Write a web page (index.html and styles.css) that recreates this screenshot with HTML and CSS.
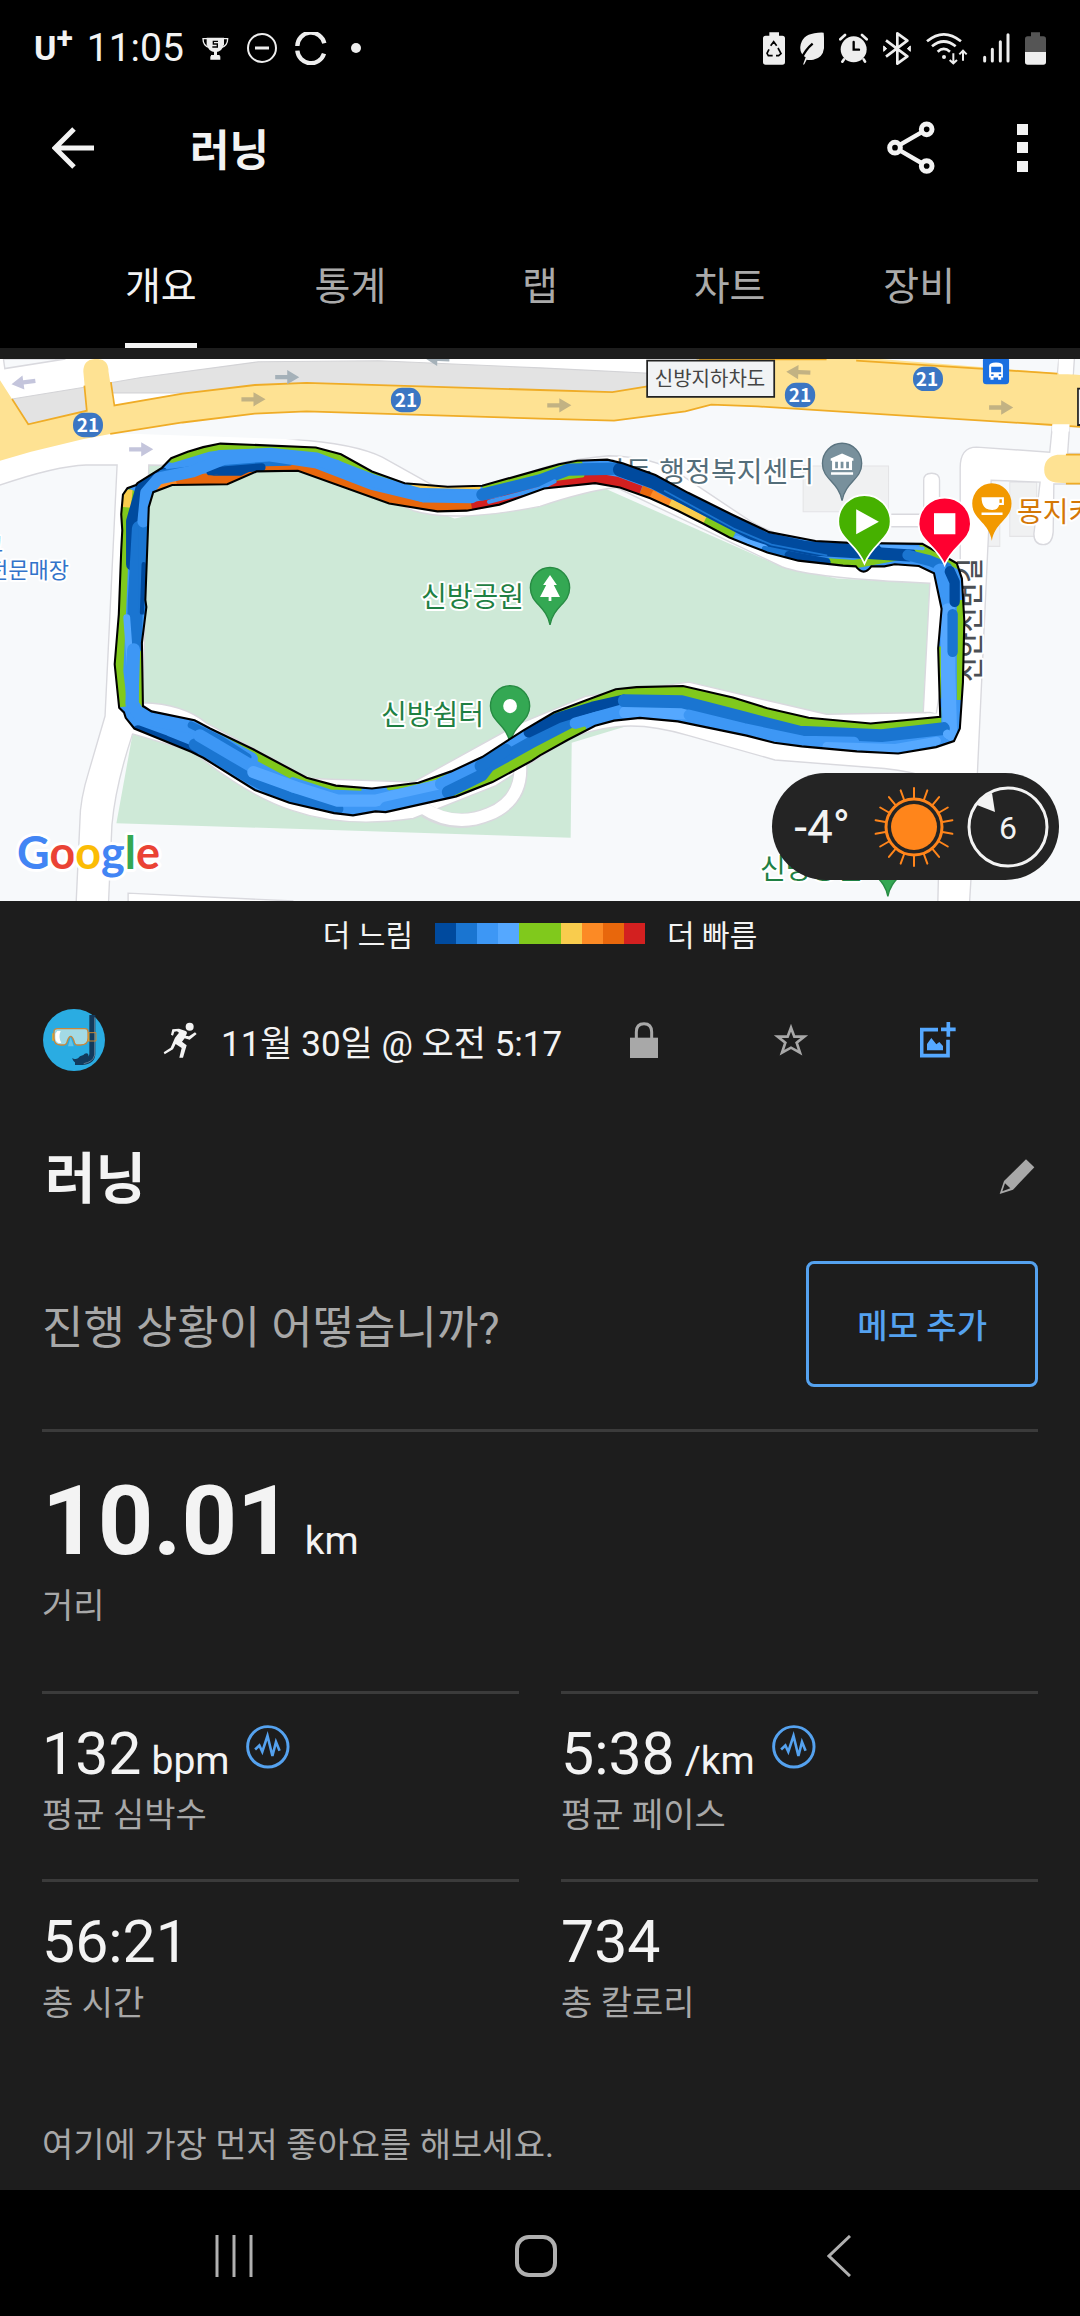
FILE: index.html
```html
<!DOCTYPE html>
<html lang="ko">
<head>
    <meta charset="UTF-8">
    <meta name="viewport" content="width=device-width, initial-scale=1.0">
    <title>러닝</title>
    <link rel="stylesheet" href="styles.css">
</head>
<body>

    <header class="top">
        <!-- Status bar -->
        <div class="status-bar">
            <div class="status-left">
                <span class="carrier">U<sup>+</sup></span>
                <span class="clock">11:05</span>
                <svg width="27" height="23" viewBox="546 112 81 69" fill="none" stroke="#eee" stroke-width="4">
                    <path d="M560 114h52v20q-4 22-26 24q-22-2-26-24z" fill="#eee" stroke="none"/>
                    <path d="M562 117h-13q0 22 20 27M610 117h13q0 22-20 27"/>
                    <path d="M582 154h9v12h8v4h2v10h-30v-10h2v-4h9z" fill="#eee" stroke="none"/>
                    <path d="M594 125h-14v8h12v9h-15" stroke="#000"/>
                </svg>
                <svg width="30" height="30" viewBox="0 0 30 30" fill="none" stroke="#eee">
                    <circle cx="15" cy="15" r="14" stroke-width="2"/>
                    <path d="M8 15h14" stroke-width="3"/>
                </svg>
                <svg width="32" height="33" viewBox="821 95 96 99" fill="none" stroke="#eee" stroke-width="13">
                    <path d="M828 137A41 41 0 0 1 909 129M828 151A41 41 0 0 0 908 160"/>
                </svg>
                <span class="more-dot"></span>
            </div>
            <div class="status-right">
                <svg width="22" height="33" viewBox="78 96 66 99">
                    <path d="M97 97h29v10h10q8 0 8 8v71q0 8-8 8H86q-8 0-8-8v-71q0-8 8-8h11z" fill="#eee"/>
                    <path d="M101 137l9-12 9 12M123 144l9 17-7 6h-8M107 167h-13l-4-7 6-12" fill="none" stroke="#000" stroke-width="5"/>
                </svg>
                <svg width="24" height="33" viewBox="195 96 72 99">
                    <path d="M204 194l8-22q-18-10-16-32q4-34 42-40q15-3 28-2q2 22 1 47q-4 30-32 34q-12 2-20 0l-7 14z" fill="#eee"/>
                    <path d="M198 178q14-30 35-47" fill="none" stroke="#000" stroke-width="7"/>
                </svg>
                <svg width="29" height="31" viewBox="315 100 87 93" stroke="#eee" stroke-width="8" fill="none" stroke-linecap="round">
                    <circle cx="359" cy="149" r="39" fill="#eee" stroke="none"/>
                    <path d="M319 119l14-13M398 119l-14-13M330 179l-5 7M389 179l4 7"/>
                    <path d="M359 127v23h16" stroke="#000" stroke-width="7"/>
                </svg>
                <svg width="28" height="33" viewBox="449 96 84 99" fill="none" stroke="#eee" stroke-width="8">
                    <path d="M458 121l64 48-30 22V100l30 22-64 48" stroke-linejoin="round"/>
                    <path d="M451 138l9 8-9 8zM531 138l-9 8 9 8z" fill="#eee" stroke-width="3"/>
                </svg>
                <svg width="42" height="33" viewBox="573 96 126 99" fill="none" stroke="#eee" stroke-width="8">
                    <path d="M576 124q50-42 102 0M591 139q35-29 71 0M608 155q18-17 37 0"/>
                    <circle cx="627" cy="171" r="6" fill="#eee" stroke="none"/>
                    <path d="M655 160v30M644 180l11 10 11-10M684 182v-30M673 163l11-11 11 11" stroke-width="6"/>
                </svg>
                <svg width="27" height="30" viewBox="728 101 81 90" stroke="#eee" stroke-width="9" stroke-linecap="round">
                    <path d="M733 174v11M756 150v35M780 127v58M803 106v79"/>
                </svg>
                <svg width="21" height="33" viewBox="855 96 63 99">
                    <path d="M873 97h27v12h10q8 0 8 8v39h-63v-39q0-8 8-8h10z" fill="#555"/>
                    <path d="M855 156h63v30q0 8-8 8h-47q-8 0-8-8z" fill="#eee"/>
                </svg>
            </div>
        </div>

        <!-- App bar -->
        <div class="app-bar">
            <button class="icon-button" aria-label="뒤로">
                <svg width="42" height="42" viewBox="0 0 42 42" fill="none" stroke="#f3f3f3" stroke-width="5">
                    <path d="M42 21H4M22 2L3 21l19 19"/>
                </svg>
            </button>
            <h1>러닝</h1>
            <button class="icon-button share" aria-label="공유">
                <svg width="48" height="54" viewBox="443 362 144 162" fill="none" stroke="#f3f3f3" stroke-width="15">
                    <path d="M467 442l95-55M467 442l95 55" stroke-width="13"/>
                    <circle cx="467" cy="442" r="16" fill="#000"/>
                    <circle cx="562" cy="387" r="16" fill="#000"/>
                    <circle cx="562" cy="497" r="16" fill="#000"/>
                </svg>
            </button>
            <button class="icon-button" aria-label="더보기">
                <svg width="11" height="48" viewBox="0 0 11 48" fill="#f3f3f3">
                    <path d="M0 0h11v11H0zM0 18h11v11H0zM0 37h11v11H0z"/>
                </svg>
            </button>
        </div>

        <nav class="tabs" role="tablist">
            <button role="tab" aria-selected="true" class="active"><span>개요</span></button>
            <button role="tab" aria-selected="false"><span>통계</span></button>
            <button role="tab" aria-selected="false"><span>랩</span></button>
            <button role="tab" aria-selected="false"><span>차트</span></button>
            <button role="tab" aria-selected="false"><span>장비</span></button>
        </nav>
    </header>

    <main>
        <!-- Map -->
        <section class="map">
            <svg class="map-canvas" viewBox="0 0 1080 542" preserveAspectRatio="xMidYMid slice">
                <defs>
                    <path id="ring" clip-rule="evenodd" fill-rule="evenodd" d="M400 372L470 330L497 303L545 285L590 272L640 262L917 273L990 292L1080 340L1175 373L1300 383L1400 380L1568 335L1623 320L1676 310L1763 307L1808 317L1903 350L1998 400L2128 462L2233 510L2368 535L2468 540L2678 543L2778 597L2793 640L2800 760L2796 930L2787 1060L2770 1095L2718 1112L2608 1130L2488 1124L2328 1110L2248 1100L2168 1080L1968 1040L1858 1030L1783 1038L1728 1052L1648 1092L1568 1135L1545 1150L1430 1210L1325 1250L1120 1294L1090 1292L1025 1303L970 1297L840 1268L740 1232L590 1142L555 1125L390 1060L365 1030L360 1015L346 1002L333 880L345 740L352 560L355 505L352 460L357 405L370 387L395 378Z
                    M500 378L660 376L745 340L865 338L1130 430L1270 452L1355 450L1450 433L1580 388L1728 373L1800 385L1888 415L1968 450L2040 485L2118 525L2168 545L2228 567L2318 590L2448 604L2485 606Q2508 635 2530 606L2568 606L2598 600L2668 605L2712 625L2734 725L2724 835L2730 1027L2528 1046L2348 1030L2228 1003L2128 973L1983 941L1848 944L1788 950L1698 982L1608 1015L1520 1065L1400 1140L1310 1180L1215 1212L1080 1228L975 1220L890 1198L735 1118L610 1060L565 1037L440 1012L415 997L412 820L425 720L422 700L432 440L445 398Z"/>
                    <clipPath id="ringClip"><use href="#ring"/></clipPath>
                    <path id="arrow" d="M-35-6H0V-20L35 0L0 20V6H-35Z"/>
                    <path id="pin" d="M0 104C-10 50-57 45-57 0A57 57 0 0 1 57 0C57 45 10 50 0 104Z"/>
                </defs>
                <rect width="1080" height="542" fill="#f7f9fb"/>

                <g transform="translate(0 -9) scale(.3444 .3571)">
                    <!-- Blocks and park -->
                    <g fill="#f0f1f2" stroke="#e4e4e6" stroke-width="3">
                        <path d="M2332 325h248v128h-248zM2932 370h78v152h-78zM2858 480h45v70h-45z"/>
                    </g>
                    <path fill="#cee9d7" d="M432 322H900L1320 472L1750 385L2270 607L2430 640L2700 653L2680 1030L2400 1090L1900 1030L1660 1100L1657 1366L338 1325L385 1075L415 990Z"/>

                    <!-- Side roads -->
                    <g fill="#fff" stroke="#d9d9de" stroke-width="4">
                        <path d="M10 20L14 52L200 20ZM-5 380Q160 325 250 322H340L305 1025L258 1180Q232 1260 232 1320L221 1550H315L325 1330Q335 1220 385 1075L415 988L432 322L900 330L1200 450Q1320 485 1568 438Q1700 395 1790 385L2270 607Q2360 640 2700 653L2680 1030H2760L2830 600L2368 545Q2250 520 2180 480L1970 345Q1900 300 1768 296Q1600 310 1500 360Q1300 410 1240 370L1110 300Q1030 262 850 250L400 235L-5 290Z"/>
                        <path d="M415 988Q530 990 600 1045L900 1200L1200 1210L1500 1050L1700 970L2000 930L2400 1020L2700 1015L2800 1040L2838 1200H2700Q2650 1180 2568 1172L2250 1148L2000 1080Q1880 1045 1790 1055Q1700 1065 1640 1095L1440 1220L1200 1312Q1000 1340 850 1290Q720 1250 560 1125L385 1075Z"/>
                        <path d="M372 1550V1521L850 1543V1550Z"/>
                        <path d="M2788 600V330Q2788 272 2836 272L3048 286L3075 20H3120L3100 290H3145V375H3060L3058 510Q3055 545 3030 545Q3002 545 3002 515L3020 370L2878 365L2868 560L2838 1185L2815 1550H2723L2732 1180L2700 1130Z"/>
                        <path d="M2682 500V365Q2682 345 2705 345Q2728 345 2728 365V500M2588 460H2680V495H2588"/>
                    </g>
                    <path d="M330 1067L400 985L430 1000L420 1070L382 1074Z" fill="#fff"/>
                    <path d="M2690 1018H2770V1190H2728Q2690 1120 2660 1100Z" fill="#fff"/>
                    <path d="M1235 1290Q1320 1340 1420 1300T1510 1160" fill="none" stroke="#d9d9de" stroke-width="42"/>
                    <path d="M1225 1280Q1320 1340 1420 1300T1510 1155" fill="none" stroke="#fff" stroke-width="34"/>

                    <!-- Main road -->
                    <path d="M0 20H2500V120L1000 240L0 310Z" fill="#fff"/>
                    <path d="M320 236L530 203L740 178L890 172L1568 192L1783 198L2065 153L3040 215V260H1400L850 250L400 235Z" fill="#f7f9fb"/>
                    <path d="M10 25L14 52L190 25Z" fill="#f7f9fb" stroke="#d9d9de" stroke-width="4"/>
                    <path d="M35 137L240 105L410 77L750 33L1100 30L1568 50L1900 66L1880 120H300L252 172L82 208Z" fill="#e3e3e3" stroke="#d3d3d6" stroke-width="3"/>
                    <path d="M0 85L82 208L252 170L242 60Q242 25 280 25Q315 25 315 60L330 155L530 122L740 98L890 92L1568 112L1778 118L1880 102L2035 20H2488L3136 70V215L2200 158L2065 153L1990 172L1783 198L1568 192L890 172L740 178L530 203L320 235L240 250L90 285L0 310Z" fill="#fee293"/>
                    <path d="M35 137L82 208L252 170L245 100M322 90L332 155L530 122L740 98L890 92L1568 112L1778 118L1880 102M2030 26H2400M2486 30L3070 66M320 235L530 203L740 178L890 172L1568 192L1783 198L1990 172L2065 153L2200 158L3058 210M3105 213L3136 215" fill="none" stroke="#efac27" stroke-width="5"/>
                    <path d="M3136 293H3070Q3032 300 3032 335T3075 372L3136 375Z" fill="#fee293"/>
                    <path d="M3095 293H3136M3095 374H3136" stroke="#efac27" stroke-width="5"/>
                    <path d="M3074 20h40v48h-40zM3055 208h50v20h-50z" fill="#fff"/>
                    <g fill="#c4c5dc">
                        <use href="#arrow" transform="translate(68 91) rotate(172)"/>
                        <use href="#arrow" transform="translate(410 278)"/>
                    </g>
                    <g fill="#a5b1b9">
                        <use href="#arrow" transform="translate(834 76)"/>
                        <use href="#arrow" transform="translate(1270 25) rotate(182)"/>
                    </g>
                    <g fill="#c2b283">
                        <use href="#arrow" transform="translate(736 138)"/>
                        <use href="#arrow" transform="translate(1624 155)"/>
                        <use href="#arrow" transform="translate(2318 62) rotate(182)"/>
                        <use href="#arrow" transform="translate(2907 161)"/>
                    </g>
                    <g fill="#3b76c3">
                        <rect x="212" y="176" width="87" height="68" rx="32"/>
                        <rect x="1135" y="106" width="87" height="68" rx="32"/>
                        <rect x="2279" y="92" width="88" height="68" rx="32"/>
                        <rect x="2651" y="47" width="87" height="68" rx="32"/>
                    </g>
                    <path d="M1879 30h369v101h-369z" fill="#f1f3f5" stroke="#222" stroke-width="5"/>
                    <path d="M3130 108h20v102h-20z" fill="#f1f3f5" stroke="#222" stroke-width="5"/>

                    <!-- Bus stop -->
                    <rect x="2854" y="20" width="76" height="76" rx="10" fill="#1a6fe0"/>
                    <path d="M2872 45q0-10 20-10t20 10v32h-5v6h-9v-6h-13v6h-9v-6h-4z" fill="#fff"/>
                    <path d="M2878 47h29v15h-29zM2878 68h7v5h-7zM2900 68h7v5h-7z" fill="#1a6fe0"/>

                    <!-- Place pins -->
                    <use href="#pin" transform="translate(1597 666)" fill="#34a853" stroke="#278b43" stroke-width="4"/>
                    <path d="M1597 630l20 28h-9l18 34h-25v11h-8v-11h-25l18-34h-9z" fill="#fff"/>
                    <use href="#pin" transform="translate(1481 997)" fill="#34a853" stroke="#278b43" stroke-width="4"/>
                    <circle cx="1481" cy="997" r="20" fill="#fff"/>
                    <use href="#pin" transform="translate(2445 318)" fill="#78909c" stroke="#5b7480" stroke-width="4"/>
                    <path d="M2412 310v-6l33-14 33 14v6h-4v26h-58v-26zM2413 342h64v7h-64z" fill="#fff"/>
                    <path d="M2425 313h8v18h-8zM2441 313h8v18h-8zM2457 313h8v18h-8z" fill="#78909c"/>
                    <use href="#pin" transform="translate(2880 430)" fill="#f29900"/>
                    <path d="M2850 412h65v22h-14q-3 14-20 14q-31-1-31-36zM2850 455h61v7h-61z" fill="#fff"/>
                    <path d="M2902 418h7v10h-7z" fill="#f29900"/>
                    <use href="#pin" transform="translate(2578 1426)" fill="#34a853" stroke="#278b43" stroke-width="4"/>
                </g>

                <!-- Map labels -->
                <g class="map-label">
                    <g class="shield">
                        <text x="88" y="73">21</text>
                        <text x="406" y="48">21</text>
                        <text x="800" y="43">21</text>
                        <text x="927" y="27">21</text>
                    </g>
                    <text class="road-name" x="710" y="27">신방지하차도</text>
                    <text class="shop" x="-17" y="193">코</text>
                    <text class="shop" x="-12" y="219">전문매장</text>
                    <text class="park" x="421" y="248">신방공원</text>
                    <text class="park" x="381" y="366">신방쉼터</text>
                    <text class="park" x="760" y="520">신방공원</text>
                    <text class="office" x="600" y="123">방동 행정복지센터</text>
                    <text class="cafe" x="1017" y="163">몽지카</text>
                    <text class="street" transform="translate(980 323) rotate(-90)">신안신번길</text>
                    <text class="google" x="17" y="510"><tspan fill="#4285f4">G</tspan><tspan fill="#ea4335">o</tspan><tspan fill="#fbbc05">o</tspan><tspan fill="#4285f4">g</tspan><tspan fill="#34a853">l</tspan><tspan fill="#ea4335">e</tspan></text>
                </g>

                <!-- Route -->
                <g transform="translate(0 -9) scale(.3444 .3571)">
                    <use href="#ring" fill="#3d97f5"/>
                    <g clip-path="url(#ringClip)" fill="none" stroke-linecap="round" stroke-linejoin="round">
                        <!-- fast sections -->
                        <path d="M500 300L600 270L640 264L917 275L990 294L1090 347L1180 375" stroke="#80c91c" stroke-width="32"/>
                        <path d="M1200 380L1390 384" stroke="#f9cc4d" stroke-width="12"/>
                        <path d="M1410 378L1568 335L1680 320" stroke="#80c91c" stroke-width="24"/>
                        <path d="M450 390L570 360" stroke="#fc8a25" stroke-width="26"/>
                        <path d="M530 365L670 365L760 330L870 332L1130 420L1270 440L1360 440" stroke="#e8670c" stroke-width="38"/>
                        <path d="M1370 442L1450 427L1580 382L1728 360L1790 370L1860 395" stroke="#d32020" stroke-width="30" stroke-linecap="butt"/>
                        <path d="M1860 395L1900 412" stroke="#e8670c" stroke-width="34" stroke-linecap="butt"/>
                        <path d="M1890 406L1950 436" stroke="#fc8a25" stroke-width="30" stroke-linecap="butt"/>
                        <path d="M1945 430L2050 482" stroke="#f9cc4d" stroke-width="28" stroke-linecap="butt"/>
                        <path d="M2045 480L2130 522" stroke="#80c91c" stroke-width="28" stroke-linecap="butt"/>
                        <path d="M1610 360L1690 350" stroke="#80c91c" stroke-width="14"/>
                        <path d="M392 395L362 470L354 600L345 800L340 900L352 1000" stroke="#80c91c" stroke-width="36" stroke-linecap="butt"/>
                        <path d="M365 390L360 440" stroke="#f9cc4d" stroke-width="40" stroke-linecap="butt"/>
                        <path d="M409 820V1000" stroke="#80c91c" stroke-width="12"/>
                        <path d="M600 1060L735 1120L890 1200L1050 1230" stroke="#80c91c" stroke-width="44" stroke-linecap="butt"/>
                        <path d="M1130 1226L1220 1212L1300 1185" stroke="#80c91c" stroke-width="14"/>
                        <path d="M1330 1245L1430 1200L1580 1120L1680 1068" stroke="#80c91c" stroke-width="48"/>
                        <path d="M1600 1015L1790 952L1983 944L2128 975L2348 1035L2528 1050L2730 1032" stroke="#80c91c" stroke-width="64"/>
                        <path d="M2360 592L2480 600L2700 560L2750 590" stroke="#80c91c" stroke-width="24"/>
                        <path d="M2680 548L2785 605" stroke="#80c91c" stroke-width="20"/>
                        <path d="M2730 830V975M2790 700V980" stroke="#80c91c" stroke-width="24" stroke-linecap="butt"/>

                        <!-- slow sections -->
                        <path d="M610 352L765 322L700 352Z" fill="#004a9e" stroke="none"/>
                        <path d="M384 600L384 480L412 385L470 345" stroke="#004a9e" stroke-width="36"/>
                        <path d="M405 500L393 700L390 830" stroke="#1a75d1" stroke-width="44"/>
                        <path d="M414 460V730" stroke="#1a75d1" stroke-width="24"/>
                        <path d="M417 600L412 735" stroke="#004a9e" stroke-width="12"/>
                        <path d="M368 750L378 880" stroke="#55a8ff" stroke-width="20"/>
                        <path d="M470 345L560 335L640 318L840 314" stroke="#1a75d1" stroke-width="20"/>
                        <path d="M610 340L760 328" stroke="#004a9e" stroke-width="22"/>
                        <path d="M416 480L424 400L460 360L560 340L650 305L780 295L920 315L1080 375L1230 410L1370 412" stroke="#3d97f5" stroke-width="34"/>
                        <path d="M640 298L790 292L920 305L1080 365L1230 408" stroke="#3d97f5" stroke-width="36"/>
                        <path d="M1400 405L1568 365L1650 335L1800 332" stroke="#1a75d1" stroke-width="34"/>
                        <path d="M1420 425L1568 388L1610 368" stroke="#3d97f5" stroke-width="12"/>
                        <path d="M1800 335L1900 370L2080 460L2220 530L2340 555L2640 572" stroke="#004a9e" stroke-width="40"/>
                        <path d="M1930 395L2130 500L2240 545L2400 575" stroke="#1a75d1" stroke-width="5"/>
                        <path d="M2140 530L2220 555" stroke="#55a8ff" stroke-width="20"/>
                        <path d="M2220 558L2360 585L2400 590" stroke="#1a75d1" stroke-width="18"/>
                        <path d="M2290 575L2400 595" stroke="#004a9e" stroke-width="24"/>
                        <path d="M2560 548L2680 556" stroke="#55a8ff" stroke-width="10"/>
                        <path d="M2635 574L2700 590L2750 610" stroke="#1a75d1" stroke-width="30"/>
                        <path d="M2730 620L2755 740V1040" stroke="#3d97f5" stroke-width="44"/>
                        <path d="M2753 730V900L2758 1070" stroke="#55a8ff" stroke-width="42"/>
                        <path d="M2766 740V845" stroke="#1a75d1" stroke-width="30"/>
                        <path d="M2758 620L2772 650V705" stroke="#004a9e" stroke-width="30"/>
                        <path d="M388 840L383 990L410 1030L560 1055L730 1145" stroke="#3d97f5" stroke-width="38"/>
                        <path d="M400 1066L480 1094L560 1125" stroke="#004a9e" stroke-width="30"/>
                        <path d="M565 1105L720 1195L840 1255L980 1285" stroke="#1a75d1" stroke-width="34"/>
                        <path d="M555 1050L640 1090L720 1140" stroke="#1a75d1" stroke-width="20"/>
                        <path d="M580 1080L730 1165" stroke="#3d97f5" stroke-width="36"/>
                        <path d="M850 1205L960 1240L1100 1245" stroke="#3d97f5" stroke-width="18"/>
                        <path d="M735 1182L860 1225L980 1262L1090 1262L1270 1220" stroke="#55a8ff" stroke-width="34"/>
                        <path d="M1120 1282L1290 1245M1280 1215L1420 1150" stroke="#3d97f5" stroke-width="34"/>
                        <path d="M1300 1238L1400 1190L1420 1165L1540 1100L1660 1040" stroke="#1a75d1" stroke-width="34"/>
                        <path d="M1395 1165L1470 1120" stroke="#1a75d1" stroke-width="34"/>
                        <path d="M1535 1070L1620 1030L1720 1000L1810 980" stroke="#004a9e" stroke-width="30"/>
                        <path d="M1670 1045L1800 1010L1990 1015" stroke="#3d97f5" stroke-width="32"/>
                        <path d="M1815 1015L1990 1018" stroke="#55a8ff" stroke-width="34"/>
                        <path d="M1812 982L1980 985L2160 1030L2320 1070L2560 1080L2740 1060" stroke="#1a75d1" stroke-width="36"/>
                        <path d="M2000 1022L2160 1060L2330 1095L2480 1098" stroke="#3d97f5" stroke-width="30"/>
                        <path d="M2400 1110L2600 1115L2720 1095" stroke="#55a8ff" stroke-width="24"/>
                        <path d="M2750 1075L2765 1085" stroke="#55a8ff" stroke-width="24"/>
                    </g>
                    <use href="#ring" fill="none" stroke="#000" stroke-width="6"/>

                    <!-- Start and finish -->
                    <path d="M2510 598C2485 540 2434 530 2434 480A76 74 0 0 1 2586 480C2586 530 2535 540 2510 598Z" fill="#46b100" stroke="#fff" stroke-width="5"/>
                    <path d="M2486 446L2552 481L2486 516Z" fill="#fff"/>
                    <path d="M2743 602C2718 545 2667 535 2667 487A76 74 0 0 1 2819 487C2819 535 2768 545 2743 602Z" fill="#ff0030" stroke="#fff" stroke-width="5"/>
                    <path d="M2712 457h62v59h-62z" fill="#fff"/>
                </g>
            </svg>

            <div class="weather">
                <span class="temperature">-4°</span>
                <svg width="80" height="80" viewBox="-40 -40 80 80">
                    <circle r="23" fill="#ff851b"/>
                    <circle r="28" fill="none" stroke="#ff851b" stroke-width="3"/>
                    <g stroke="#ff851b" stroke-width="2" stroke-linecap="round">
                        <path d="M0-29V-39M0 29V39"/>
                        <path d="M0-29V-39M0 29V39" transform="rotate(20)"/>
                        <path d="M0-29V-39M0 29V39" transform="rotate(40)"/>
                        <path d="M0-29V-39M0 29V39" transform="rotate(60)"/>
                        <path d="M0-29V-39M0 29V39" transform="rotate(80)"/>
                        <path d="M0-29V-39M0 29V39" transform="rotate(100)"/>
                        <path d="M0-29V-39M0 29V39" transform="rotate(120)"/>
                        <path d="M0-29V-39M0 29V39" transform="rotate(140)"/>
                        <path d="M0-29V-39M0 29V39" transform="rotate(160)"/>
                    </g>
                </svg>
                <svg class="wind" width="82" height="82" viewBox="-41 -41 82 82">
                    <circle r="39" fill="none" stroke="#f3f3f3" stroke-width="3"/>
                    <path d="M-31-22Q-26-31-16-34L-13-15Z" fill="#f3f3f3"/>
                    <text y="12" text-anchor="middle">6</text>
                </svg>
            </div>
        </section>

        <div class="legend">
            <span>더 느림</span>
            <div class="scale">
                <i class="pace-1"></i><i class="pace-2"></i><i class="pace-3"></i><i class="pace-4"></i><i class="pace-5"></i><i class="pace-5"></i><i class="pace-6"></i><i class="pace-7"></i><i class="pace-8"></i><i class="pace-9"></i>
            </div>
            <span>더 빠름</span>
        </div>

        <!-- Activity info -->
        <section class="info">
            <div class="meta">
                <svg width="62" height="62" viewBox="129 87 186 186">
                    <circle cx="222" cy="180" r="93" fill="#2aace2"/>
                    <path d="M277 105V222Q277 243 248 246L225 246" fill="none" stroke="#123a5c" stroke-width="18"/>
                    <path d="M284 112V225Q280 246 250 251" fill="none" stroke="#5d7c95" stroke-width="3"/>
                    <path d="M216 235q10 5 18 0q4-8 16-10q6-8 14-4l4 14-22 20q-22 0-30-20z" fill="#123a5c"/>
                    <path d="M262 158h26v25h-26z" fill="none" stroke="#c88632" stroke-width="3"/>
                    <path d="M157 160h8v22h-8zM260 158h8v24h-8z" fill="#f6b11c"/>
                    <path d="M172 146h83q9 0 9 9v20q0 20-22 20h-10q-8 0-10-12q-5-14-10-14t-10 14q-2 12-12 12h-8q-20 0-20-20v-20q0-9 10-9z" fill="#a3dae5" stroke="#c9873b" stroke-width="4"/>
                    <path d="M172 153h10q-8 18 2 36h-8q-10-4-10-16v-12z" fill="#fff"/>
                    <path d="M212 171l-8 28h17z" fill="#62c4ea"/>
                </svg>
                <div class="when">
                    <svg width="34" height="36" viewBox="488 125 102 108" fill="#f3f3f3">
                        <circle cx="568" cy="139" r="12"/>
                        <path d="M516 147L536 145L554 151Q562 154 559 161L556 166L566 168L584 156L589 161L568 178L553 174L545 184L559 195L548 232H537L544 203L526 191L518 207L493 222L490 216L511 202L524 172L536 157L530 153L522 154L518 166L512 163Z"/>
                    </svg>
                    <time>11월 30일 @ 오전 5:17</time>
                </div>
                <button class="icon-button" aria-label="비공개">
                    <svg width="28" height="36" viewBox="90 126 84 108">
                        <path d="M109 175V156Q109 131 132 131T155 156V175" fill="none" stroke="#a8a8a8" stroke-width="9"/>
                        <path d="M90 173h84v61H90z" fill="#a8a8a8"/>
                    </svg>
                </button>
                <button class="icon-button" aria-label="즐겨찾기">
                    <svg width="36" height="36" viewBox="519 129 108 108" fill="none" stroke="#a8a8a8" stroke-width="8">
                        <path d="M573 146L583 173L613 173L590 191L600 221L573 206L546 221L556 191L533 173L563 173Z"/>
                    </svg>
                </button>
                <button class="icon-button" aria-label="사진 추가">
                    <svg width="36" height="36" viewBox="966 121 108 108" fill="none" stroke="#55a8ff" stroke-width="11">
                        <path d="M1020 144H971V222H1050V174M1029 143H1073M1051 121V165"/>
                        <path d="M987 206V187L1000 169L1015 188L1024 181L1035 193V206Z" fill="#55a8ff" stroke="none"/>
                    </svg>
                </button>
            </div>

            <div class="title-row">
                <h2>러닝</h2>
                <button class="icon-button" aria-label="편집">
                    <svg width="36" height="36" viewBox="1197 538 108 108">
                        <path d="M1278 539L1303 563L1239 630L1199 643L1212 604Z" fill="#a8a8a8"/>
                        <path d="M1215 611L1231 626L1207 635Z" fill="#1d1d1d"/>
                    </svg>
                </button>
            </div>

            <div class="note-row">
                <p>진행 상황이 어떻습니까?</p>
                <button class="note-button">메모 추가</button>
            </div>

            <!-- Stats -->
            <div class="stat distance">
                <div class="value">10.01 <small>km</small></div>
                <div class="label">거리</div>
            </div>
            <div class="stat-group">
                <div class="stat">
                    <div class="value">132 <small>bpm</small>
                        <svg width="44" height="44" viewBox="678 105 135 135" fill="none" stroke="#55a2ef" stroke-width="9">
                            <circle cx="745" cy="172" r="62"/>
                            <path d="M706 180L719 168L728 187L744 138L759 200L770 157L781 184" stroke-width="8"/>
                        </svg>
                    </div>
                    <div class="label">평균 심박수</div>
                </div>
                <div class="stat">
                    <div class="value">5:38 <small>/km</small>
                        <svg width="44" height="44" viewBox="678 105 135 135" fill="none" stroke="#55a2ef" stroke-width="9">
                            <circle cx="745" cy="172" r="62"/>
                            <path d="M706 180L719 168L728 187L744 138L759 200L770 157L781 184" stroke-width="8"/>
                        </svg>
                    </div>
                    <div class="label">평균 페이스</div>
                </div>
                <div class="stat">
                    <div class="value">56:21</div>
                    <div class="label">총 시간</div>
                </div>
                <div class="stat">
                    <div class="value">734</div>
                    <div class="label">총 칼로리</div>
                </div>
            </div>

            <p class="likes">여기에 가장 먼저 좋아요를 해보세요.</p>
        </section>
    </main>

    <!-- System navigation -->
    <footer class="system-nav">
        <button class="icon-button" aria-label="최근 앱">
            <svg width="40" height="42" viewBox="0 0 40 42" stroke="#b0b0b0" stroke-width="3">
                <path d="M3 0v42M20 0v42M37 0v42"/>
            </svg>
        </button>
        <button class="icon-button" aria-label="홈">
            <svg width="42" height="42" viewBox="0 0 42 42" fill="none" stroke="#b0b0b0" stroke-width="4">
                <rect x="2" y="2" width="38" height="38" rx="12"/>
            </svg>
        </button>
        <button class="icon-button" aria-label="뒤로">
            <svg width="24" height="42" viewBox="0 0 24 42" fill="none" stroke="#b0b0b0" stroke-width="3">
                <path d="M23 1L2 21l21 20"/>
            </svg>
        </button>
    </footer>

</body>
</html>
```
FILE: styles.css
```css
* {
    box-sizing: border-box;
}

body {
    font-family: Roboto, "Noto Sans CJK KR", sans-serif;
    margin: 0;
    background-color: #1d1d1d;
    color: #f3f3f3;
    min-height: 100vh;
    display: flex;
    flex-direction: column;
}

h1, h2, p {
    margin: 0;
}

button {
    font-family: inherit;
    background: none;
    border: none;
    padding: 0;
    color: inherit;
    cursor: pointer;
}

svg {
    display: block;
    flex-shrink: 0;
}

.top {
    background-color: #000;
    margin-bottom: 11px;
}

/* Status bar */
.status-bar {
    height: 96px;
    padding: 0 34px;
    display: flex;
    justify-content: space-between;
    align-items: center;
}

.status-left,
.status-right {
    display: flex;
    align-items: center;
    gap: 15px;
}

.status-left {
    gap: 18px;
}

.carrier {
    font-size: 34px;
    line-height: 40px;
    font-weight: bold;
    margin-right: -4px;
}

.carrier sup {
    font-size: 30px;
    line-height: 1px;
}

.clock {
    font-size: 39px;
}

.more-dot {
    width: 10px;
    height: 10px;
    margin-left: 6px;
    border-radius: 50%;
    background-color: #eee;
}

/* App bar */
.app-bar {
    height: 104px;
    padding: 0 52px;
    display: flex;
    align-items: center;
}

.app-bar h1 {
    flex: 1;
    margin-left: 96px;
    padding-bottom: 2px;
    font-size: 43px;
    font-weight: bold;
}

.share {
    margin-right: 82px;
}

.icon-button {
    display: flex;
    justify-content: center;
    align-items: center;
}

.tabs {
    display: flex;
    padding: 0 66px;
}

.tabs button {
    flex: 1;
    display: flex;
    justify-content: center;
    font-size: 39px;
    line-height: 56px;
    color: #aaa;
}

.tabs span {
    padding: 59px 0 28px;
    border-bottom: 5px solid transparent;
}

.tabs .active {
    color: #f3f3f3;
}

.tabs .active span {
    border-color: #f3f3f3;
}

/* Map */
.map {
    position: relative;
}

.map-canvas {
    width: 100%;
    aspect-ratio: 1080 / 542;
}

.map-label {
    font-family: "Noto Sans CJK KR", sans-serif;
    font-size: 28px;
    paint-order: stroke;
    stroke: #fff;
    stroke-width: 4px;
    stroke-linejoin: round;
}

.shield {
    font-size: 19px;
    font-weight: bold;
    fill: #fff;
    stroke: none;
    text-anchor: middle;
}

.road-name {
    font-size: 20px;
    fill: #444;
    stroke: none;
    text-anchor: middle;
}

.shop {
    font-size: 22px;
    fill: #3273ca;
}

.park {
    fill: #1f8043;
}

.office {
    fill: #546e7a;
}

.cafe {
    fill: #d47706;
}

.street {
    font-size: 27px;
    font-weight: 500;
    fill: #4b4f54;
}

.google {
    font-family: Lato, sans-serif;
    font-size: 45px;
    font-weight: bold;
    stroke-width: 6px;
}

.weather {
    position: absolute;
    right: 21px;
    bottom: 21px;
    height: 107px;
    padding: 0 10px 0 22px;
    display: flex;
    align-items: center;
    gap: 13px;
    border-radius: 54px;
    background-color: #242424;
}

.temperature {
    font-size: 46px;
    margin-right: 11px;
}

.wind text {
    font-size: 32px;
    fill: #f3f3f3;
}

.legend {
    height: 66px;
    padding-bottom: 2px;
    display: flex;
    justify-content: center;
    align-items: center;
    gap: 22px;
    font-size: 30px;
}

.scale {
    width: 210px;
    height: 21px;
    display: flex;
}

.scale i {
    flex: 1;
}

.pace-1 { background-color: #004a9e; }
.pace-2 { background-color: #1a75d1; }
.pace-3 { background-color: #3d97f5; }
.pace-4 { background-color: #55a8ff; }
.pace-5 { background-color: #80c91c; }
.pace-6 { background-color: #f9cc4d; }
.pace-7 { background-color: #fc8a25; }
.pace-8 { background-color: #e8670c; }
.pace-9 { background-color: #d32020; }

/* Activity info */
.info {
    padding: 42px 42px 25px;
}

.meta {
    display: grid;
    grid-template-columns: 62px 1fr 147px 147px 147px;
    align-items: center;
    padding: 0 27px 0 1px;
}

.when {
    display: flex;
    align-items: center;
    gap: 24px;
    margin-left: 58px;
    font-size: 35px;
    white-space: nowrap;
}

.title-row {
    height: 80px;
    margin-top: 66px;
    padding: 0 3px;
    display: flex;
    justify-content: space-between;
    align-items: center;
}

.title-row h2 {
    padding-bottom: 6px;
    font-size: 55px;
    font-weight: bold;
}

.note-row {
    display: flex;
    justify-content: space-between;
    align-items: center;
    margin: 44px 0 42px;
    font-size: 45px;
    color: #a8a8a8;
}

.note-button {
    height: 126px;
    padding: 0 48px;
    border: 3px solid #55a2ef;
    border-radius: 8px;
    font-size: 33px;
    font-weight: 500;
    color: #55a2ef;
}

/* Stats */
.stat {
    border-top: 3px solid #3b3b3b;
    padding: 30px 0 44px;
}

.value {
    display: flex;
    align-items: baseline;
    gap: 10px;
    font-size: 59px;
    line-height: 60px;
}

.value small {
    font-size: 39px;
    line-height: 40px;
}

.value svg {
    align-self: flex-start;
    margin: 1px 0 0 7px;
}

.label {
    margin-top: 11px;
    font-size: 34px;
    line-height: 40px;
    color: #a8a8a8;
}

.distance {
    padding: 40px 0 65px;
}

.distance .value {
    gap: 12px;
    font-size: 97px;
    line-height: 98px;
    font-weight: bold;
}

.distance small {
    font-weight: normal;
}

.distance .label {
    margin-top: 16px;
}

.stat-group {
    display: grid;
    grid-template-columns: 1fr 1fr;
    column-gap: 42px;
}

.likes {
    margin-top: 58px;
    font-size: 34px;
    line-height: 40px;
    color: #a8a8a8;
}

/* System navigation */
.system-nav {
    height: 126px;
    margin-top: auto;
    padding: 6px 90px 0 83px;
    display: grid;
    grid-template-columns: 1fr 1fr 1fr;
    align-items: center;
    background-color: #000;
}
```
